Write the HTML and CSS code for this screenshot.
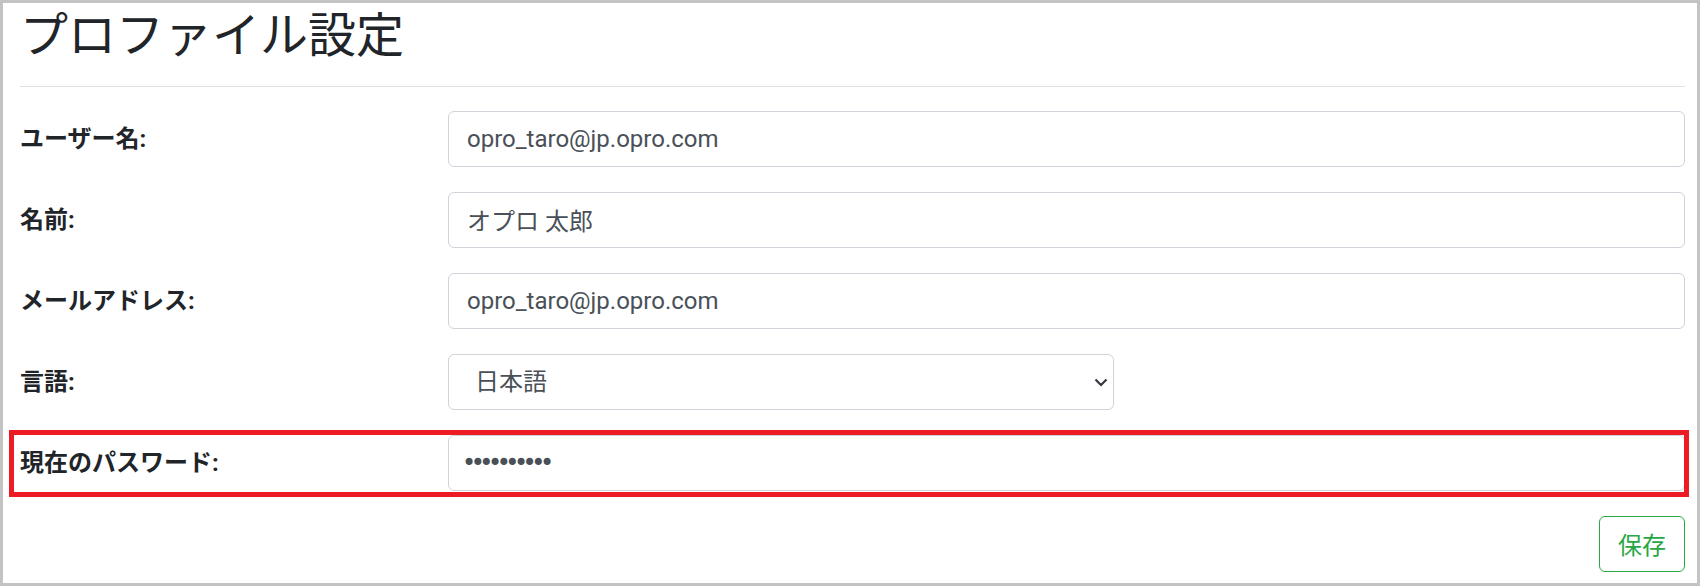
FILE: index.html
```html
<!DOCTYPE html>
<html lang="ja">
<head>
    <meta charset="UTF-8">
    <meta name="viewport" content="width=device-width, initial-scale=1.0">
    <title>プロファイル設定</title>
    <link rel="stylesheet" href="styles.css">
</head>
<body>
    <div class="frame">
        <h2 class="page-title">プロファイル設定</h2>
        <hr class="divider">

        <form class="profile-form" onsubmit="return false;">
            <div class="form-row">
                <label class="form-label" for="username">ユーザー名:</label>
                <input class="form-control" id="username" type="text" value="opro_taro@jp.opro.com">
            </div>
            <div class="form-row">
                <label class="form-label" for="name">名前:</label>
                <input class="form-control" id="name" type="text" value="オプロ 太郎">
            </div>
            <div class="form-row">
                <label class="form-label" for="email">メールアドレス:</label>
                <input class="form-control" id="email" type="text" value="opro_taro@jp.opro.com">
            </div>
            <div class="form-row">
                <label class="form-label" for="lang">言語:</label>
                <div class="select-wrap">
                    <select class="form-select" id="lang">
                        <option selected>日本語</option>
                        <option>English</option>
                    </select>
                    <svg class="select-arrow" width="14" height="9" viewBox="0 0 14 9">
                        <path d="M1.5 1.5 L7 7 L12.5 1.5" fill="none" stroke="#343a40" stroke-width="2.2"/>
                    </svg>
                </div>
            </div>
            <div class="form-row highlight">
                <label class="form-label" for="password">現在のパスワード:</label>
                <input class="form-control password" id="password" type="password" value="oprotaro12">
            </div>
            <div class="form-actions">
                <button class="btn-save" type="submit">保存</button>
            </div>
        </form>
    </div>
</body>
</html>
```

FILE: styles.css
```css
html, body {
    margin: 0;
    padding: 0;
}
body {
    font-family: "Segoe UI", Roboto, "Noto Sans CJK JP", sans-serif;
    font-size: 24px;
    line-height: 1.5;
    color: #212529;
    background-color: #fff;
}
.frame {
    box-sizing: border-box;
    width: 1700px;
    height: 586px;
    border: 3px solid #c3c3c3;
    padding: 0 12px 0 17px;
    background-color: #fff;
    overflow: hidden;
}
.page-title {
    font-family: Roboto, "Noto Sans CJK JP", sans-serif;
    font-size: 48px;
    font-weight: 400;
    line-height: 1.2;
    margin: 0;
    padding-top: 4px;
}
.divider {
    border: 0;
    border-top: 1px solid #e1e1e1;
    margin: 21px 0 24px 0;
}
.form-row {
    display: grid;
    grid-template-columns: 428px 1fr;
    align-items: center;
    margin-bottom: 25px;
}
.form-label {
    font-family: "Segoe UI", Roboto, "Noto Sans CJK JP", sans-serif;
    font-weight: bold;
    color: #212529;
}
.form-control,
.form-select {
    box-sizing: border-box;
    width: 100%;
    height: 56px;
    padding: 9px 18px;
    font-family: "Segoe UI", Roboto, "Noto Sans CJK JP", sans-serif;
    font-size: 24px;
    line-height: 36px;
    color: #495057;
    background-color: #fff;
    border: 1px solid #ced4da;
    border-radius: 6px;
    outline: none;
}
.form-control.password {
    font-family: "DejaVu Sans", sans-serif;
    font-size: 24px;
    letter-spacing: -5.5px;
    padding-left: 13px;
}
.select-wrap {
    position: relative;
    width: 666px;
}
.form-select {
    appearance: none;
    -webkit-appearance: none;
    padding-left: 26px;
}
.select-arrow {
    position: absolute;
    right: 6px;
    top: 24px;
    pointer-events: none;
}
.highlight {
    position: relative;
}
.highlight::after {
    content: "";
    position: absolute;
    left: -11px;
    top: -5px;
    right: -4px;
    bottom: -6px;
    border: 5px solid #ed1c24;
    pointer-events: none;
}
.form-actions {
    display: flex;
    justify-content: flex-end;
}
.btn-save {
    height: 56px;
    padding: 9px 18px;
    font-family: "Noto Sans CJK JP", sans-serif;
    font-size: 24px;
    line-height: 36px;
    color: #28a745;
    background-color: #fff;
    border: 1px solid #28a745;
    border-radius: 6px;
    cursor: pointer;
}
.btn-save:hover {
    color: #fff;
    background-color: #28a745;
}
```
